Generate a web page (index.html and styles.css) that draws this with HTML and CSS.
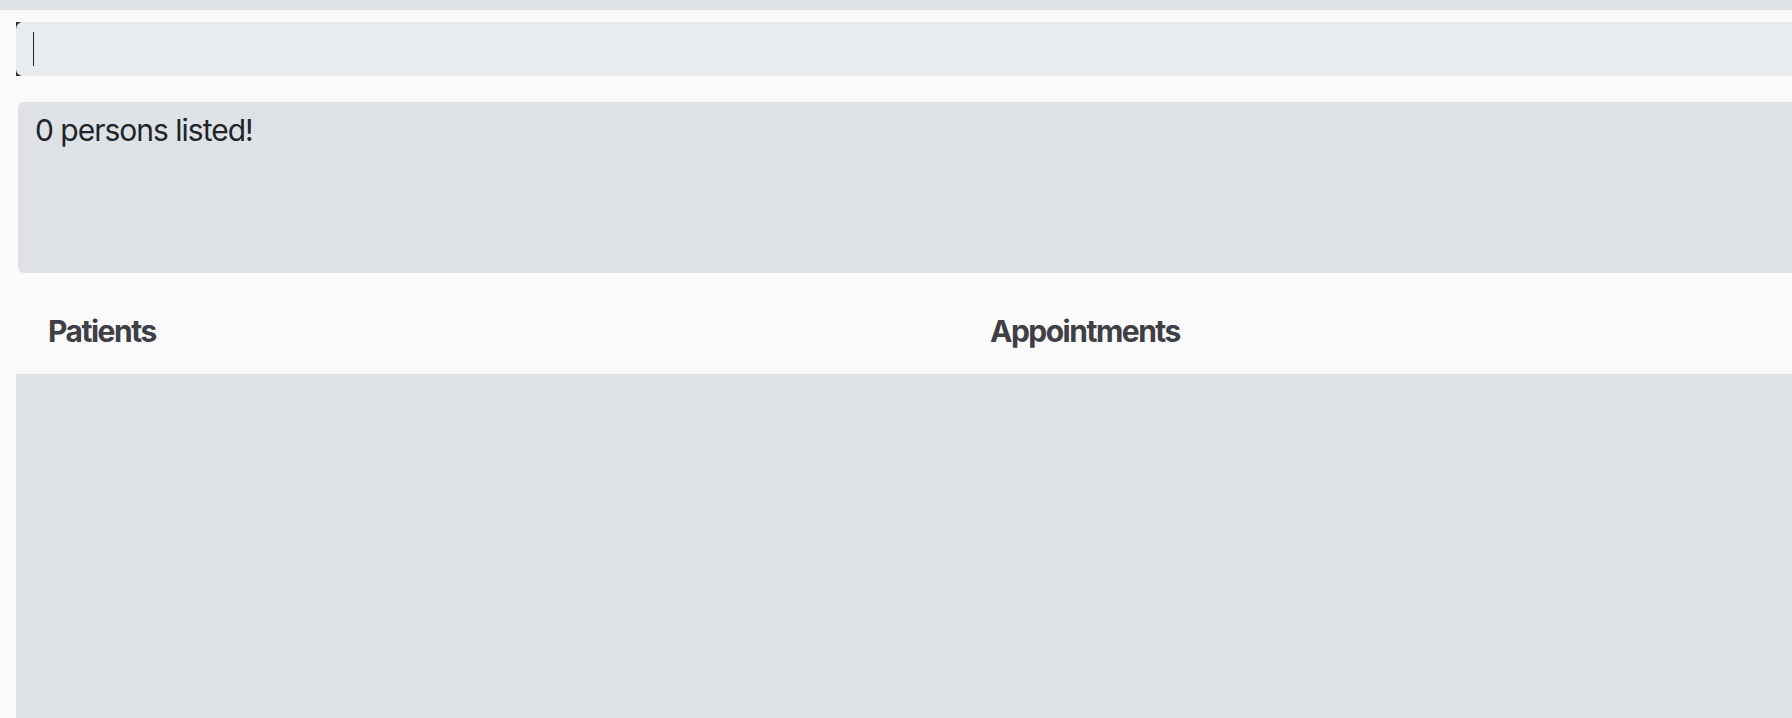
FILE: index.html
```html
<!DOCTYPE html>
<html lang="en">
<head>
<meta charset="utf-8">
<title>Persons</title>
<link rel="stylesheet" href="styles.css">
</head>
<body>
<div class="topbar"></div>
<main class="page">
  <div class="search">
    <div class="search-field"><span class="caret"></span></div>
  </div>
  <section class="summary">
    <p class="summary-text">0 persons listed!</p>
  </section>
  <section class="lists">
    <div class="list-head"><h2 class="list-title">Patients</h2></div>
    <div class="list-head"><h2 class="list-title">Appointments</h2></div>
    <div class="list-body"></div>
    <div class="list-body"></div>
  </section>
</main>
</body>
</html>
```

FILE: styles.css
```css
html, body {
  margin: 0;
  padding: 0;
  background: #fafafa;
  overflow: hidden;
  font-family: Inter, "Noto Sans", sans-serif;
}
body {
  width: 1792px;
  height: 718px;
}
.topbar {
  height: 10px;
  background: #dee2e6;
}
.page {
  width: 1900px;
  padding: 12px 0 0 16px;
  display: flex;
  flex-direction: column;
}
.search {
  height: 54px;
  background: linear-gradient(to right, #2b2f33 0, #2b2f33 5px, transparent 5px);
}
.search-field {
  height: 54px;
  background: #e9ecef;
  border-radius: 7px 0 0 7px;
  display: flex;
  align-items: center;
  padding-left: 17px;
}
.caret {
  width: 1px;
  height: 34px;
  background: #212529;
}
.summary {
  margin: 26px 0 0 2px;
  height: 171px;
  background: #dee2e6;
  border-radius: 6px 0 0 6px;
  padding: 0 17px;
}
.summary-text {
  margin: 0;
  padding-top: 8px;
  font-size: 30px;
  line-height: 40px;
  color: #212529;
  letter-spacing: -1px;
}
.lists {
  display: grid;
  grid-template-columns: 942px 942px;
  grid-template-rows: 101px 400px;
}
.list-head {
  padding: 38px 32px 0;
}
.list-title {
  margin: 0;
  font-size: 30px;
  line-height: 40px;
  font-weight: 700;
  letter-spacing: -1.5px;
  color: #3f3f46;
}
.list-body {
  background: #dee2e6;
}
```
